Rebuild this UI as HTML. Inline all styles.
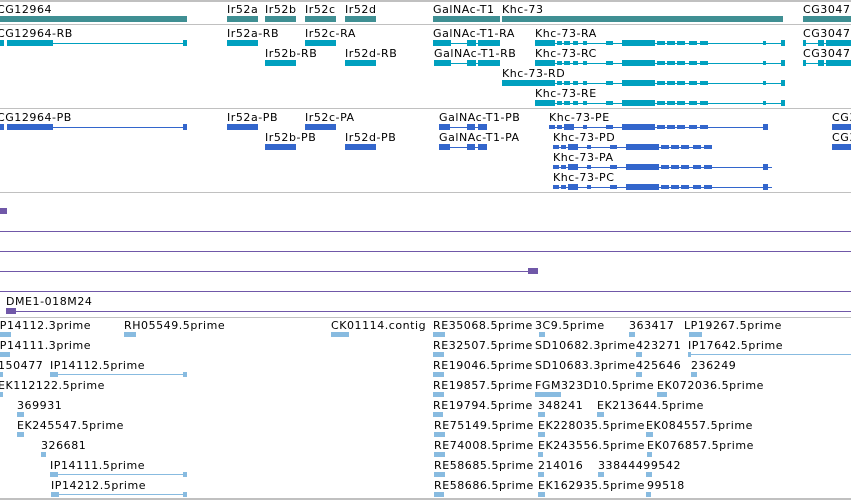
<!DOCTYPE html>
<html><head><meta charset="utf-8"><style>
html,body{margin:0;padding:0;background:#fff;width:851px;height:500px;overflow:hidden}
svg{display:block}
text{font-family:"DejaVu Sans","Liberation Sans",sans-serif;font-size:11px;fill:#000;letter-spacing:0.55px}
</style></head><body>
<svg width="851" height="500" xmlns="http://www.w3.org/2000/svg" shape-rendering="crispEdges">
<defs>
<g id="kT" fill="#00a0bf">
<rect x="535" y="3" width="250" height="1"/>
<rect x="535" y="0" width="20" height="6"/><rect x="557" y="1" width="5" height="4"/><rect x="564" y="1" width="6" height="4"/><rect x="573" y="1" width="5" height="4"/><rect x="583" y="1" width="4" height="4"/><rect x="606" y="1" width="7" height="4"/><rect x="622" y="0" width="33" height="6"/><rect x="657" y="1" width="8" height="4"/><rect x="667" y="1" width="8" height="4"/><rect x="677" y="1" width="8" height="4"/><rect x="689" y="1" width="8" height="4"/><rect x="700" y="1" width="8" height="4"/><rect x="763" y="1" width="3" height="4"/><rect x="781" y="0" width="4" height="6"/>
</g>
<g id="kP" fill="#3366cc">
<rect x="549" y="3" width="219" height="1"/>
<rect x="549" y="1" width="6" height="4"/><rect x="557" y="1" width="5" height="4"/><rect x="564" y="0" width="10" height="6"/><rect x="583" y="1" width="4" height="4"/><rect x="606" y="1" width="7" height="4"/><rect x="622" y="0" width="33" height="6"/><rect x="657" y="1" width="8" height="4"/><rect x="667" y="1" width="8" height="4"/><rect x="677" y="1" width="8" height="4"/><rect x="689" y="1" width="8" height="4"/><rect x="700" y="1" width="8" height="4"/>
</g>
</defs>
<g fill="#c0c0c0">
<rect x="0" y="0" width="851" height="2"/><rect x="0" y="24" width="851" height="1"/><rect x="0" y="108" width="851" height="1"/><rect x="0" y="192" width="851" height="1"/><rect x="0" y="317" width="851" height="1"/><rect x="0" y="498" width="851" height="2"/>
</g>
<g fill="#3f8f93">
<rect x="0" y="16" width="187" height="6"/>
<rect x="227" y="16" width="31" height="6"/><rect x="265" y="16" width="31" height="6"/><rect x="305" y="16" width="31" height="6"/><rect x="345" y="16" width="31" height="6"/>
<rect x="433" y="16" width="67" height="6"/><rect x="502" y="16" width="281" height="6"/><rect x="803" y="16" width="48" height="6"/>
</g>
<text x="-3" y="13">CG12964</text><text x="227" y="13">Ir52a</text><text x="265" y="13">Ir52b</text><text x="305" y="13">Ir52c</text><text x="345" y="13">Ir52d</text>
<text x="433" y="13">GalNAc-T1</text><text x="502" y="13">Khc-73</text><text x="803" y="13">CG3047</text>
<g fill="#00a0bf">
<rect x="0" y="40" width="4" height="6"/><rect x="7" y="40" width="46" height="6"/><rect x="53" y="43" width="134" height="1"/><rect x="183" y="40" width="4" height="6"/>
<rect x="227" y="40" width="31" height="6"/><rect x="305" y="40" width="31" height="6"/><rect x="265" y="60" width="31" height="6"/><rect x="345" y="60" width="31" height="6"/>
<rect x="433" y="40" width="18" height="6"/><rect x="433" y="43" width="67" height="1"/><rect x="467" y="40" width="9" height="6"/><rect x="478" y="40" width="22" height="6"/>
<rect x="434" y="60" width="17" height="6"/><rect x="434" y="63" width="66" height="1"/><rect x="467" y="60" width="9" height="6"/><rect x="478" y="60" width="22" height="6"/>
<rect x="803" y="40" width="3" height="6"/><rect x="803" y="43" width="48" height="1"/><rect x="818" y="40" width="6" height="6"/><rect x="826" y="40" width="25" height="6"/>
<rect x="803" y="60" width="3" height="6"/><rect x="803" y="63" width="48" height="1"/><rect x="818" y="60" width="6" height="6"/><rect x="826" y="60" width="25" height="6"/>
<rect x="502" y="80" width="53" height="6"/><rect x="502" y="83" width="40" height="1"/>
</g>
<use href="#kT" y="40"/><use href="#kT" y="60"/><use href="#kT" y="80"/><use href="#kT" y="100"/>
<text x="-3" y="37">CG12964-RB</text><text x="227" y="37">Ir52a-RB</text><text x="305" y="37">Ir52c-RA</text><text x="265" y="57">Ir52b-RB</text><text x="345" y="57">Ir52d-RB</text>
<text x="433" y="37">GalNAc-T1-RA</text><text x="535" y="37">Khc-73-RA</text><text x="803" y="37">CG3047</text>
<text x="434" y="57">GalNAc-T1-RB</text><text x="535" y="57">Khc-73-RC</text><text x="803" y="57">CG3047</text>
<text x="502" y="77">Khc-73-RD</text><text x="535" y="97">Khc-73-RE</text>
<g fill="#3366cc">
<rect x="0" y="124" width="4" height="6"/><rect x="7" y="124" width="46" height="6"/><rect x="53" y="127" width="134" height="1"/><rect x="183" y="124" width="4" height="6"/>
<rect x="227" y="124" width="31" height="6"/><rect x="305" y="124" width="31" height="6"/><rect x="265" y="144" width="31" height="6"/><rect x="345" y="144" width="31" height="6"/>
<rect x="439" y="124" width="11" height="6"/><rect x="439" y="127" width="48" height="1"/><rect x="467" y="124" width="8" height="6"/><rect x="478" y="124" width="9" height="6"/>
<rect x="439" y="144" width="11" height="6"/><rect x="439" y="147" width="48" height="1"/><rect x="467" y="144" width="8" height="6"/><rect x="478" y="144" width="9" height="6"/>
<rect x="832" y="124" width="19" height="6"/><rect x="832" y="144" width="19" height="6"/>
<rect x="763" y="124" width="5" height="6"/><rect x="763" y="164" width="5" height="6"/><rect x="763" y="184" width="5" height="6"/>
</g>
<use href="#kP" y="124"/><use href="#kP" x="4" y="144"/><use href="#kP" x="4" y="164"/><use href="#kP" x="4" y="184"/>
<rect x="712" y="146" width="60" height="3" fill="#fff"/>
<text x="-3" y="121">CG12964-PB</text><text x="227" y="121">Ir52a-PB</text><text x="305" y="121">Ir52c-PA</text><text x="265" y="141">Ir52b-PB</text><text x="345" y="141">Ir52d-PB</text>
<text x="439" y="121">GalNAc-T1-PB</text><text x="549" y="121">Khc-73-PE</text><text x="832" y="121">CG3047</text>
<text x="439" y="141">GalNAc-T1-PA</text><text x="553" y="141">Khc-73-PD</text><text x="832" y="141">CG3047</text>
<text x="553" y="161">Khc-73-PA</text><text x="553" y="181">Khc-73-PC</text>
<g fill="#7058a8">
<rect x="0" y="208" width="7" height="6"/>
<rect x="0" y="231" width="851" height="1"/><rect x="0" y="251" width="851" height="1"/><rect x="0" y="271" width="530" height="1"/><rect x="528" y="268" width="10" height="6"/><rect x="0" y="291" width="851" height="1"/>
<rect x="6" y="311" width="845" height="1"/><rect x="6" y="308" width="10" height="6"/>
</g>
<text x="6" y="305">DME1-018M24</text>
<g fill="#88bbe0">
<rect x="0" y="332" width="11" height="5"/><rect x="124" y="332" width="12" height="5"/><rect x="331" y="332" width="18" height="5"/><rect x="433" y="332" width="12" height="5"/><rect x="539" y="332" width="6" height="5"/><rect x="629" y="332" width="6" height="5"/><rect x="689" y="332" width="13" height="5"/>
<rect x="0" y="352" width="10" height="5"/><rect x="433" y="352" width="11" height="5"/><rect x="636" y="352" width="6" height="5"/><rect x="688" y="354" width="163" height="1"/><rect x="688" y="352" width="3" height="5"/>
<rect x="0" y="372" width="3" height="5"/><rect x="50" y="372" width="8" height="5"/><rect x="50" y="374" width="137" height="1"/><rect x="183" y="372" width="4" height="5"/><rect x="433" y="372" width="11" height="5"/><rect x="636" y="372" width="6" height="5"/><rect x="691" y="372" width="6" height="5"/>
<rect x="0" y="392" width="3" height="5"/><rect x="433" y="392" width="11" height="5"/><rect x="535" y="392" width="26" height="5"/><rect x="657" y="392" width="10" height="5"/>
<rect x="17" y="412" width="7" height="5"/><rect x="433" y="412" width="10" height="5"/><rect x="538" y="412" width="7" height="5"/><rect x="597" y="412" width="7" height="5"/>
<rect x="17" y="432" width="7" height="5"/><rect x="434" y="432" width="11" height="5"/><rect x="538" y="432" width="7" height="5"/><rect x="646" y="432" width="7" height="5"/>
<rect x="41" y="452" width="5" height="5"/><rect x="434" y="452" width="11" height="5"/><rect x="538" y="452" width="5" height="5"/><rect x="647" y="452" width="5" height="5"/>
<rect x="50" y="472" width="8" height="5"/><rect x="50" y="474" width="137" height="1"/><rect x="183" y="472" width="4" height="5"/><rect x="434" y="472" width="11" height="5"/><rect x="538" y="472" width="6" height="5"/><rect x="598" y="472" width="6" height="5"/><rect x="646" y="472" width="6" height="5"/>
<rect x="51" y="492" width="8" height="5"/><rect x="51" y="494" width="136" height="1"/><rect x="183" y="492" width="4" height="5"/><rect x="434" y="492" width="10" height="5"/><rect x="538" y="492" width="7" height="5"/><rect x="646" y="492" width="5" height="5"/>
</g>
<text x="-4" y="329">IP14112.3prime</text><text x="124" y="329">RH05549.5prime</text><text x="331" y="329">CK01114.contig</text><text x="433" y="329">RE35068.5prime</text><text x="535" y="329">3C9.5prime</text><text x="629" y="329">363417</text><text x="684" y="329">LP19267.5prime</text>
<text x="-4" y="349">IP14111.3prime</text><text x="433" y="349">RE32507.5prime</text><text x="535" y="349">SD10682.3prime</text><text x="636" y="349">423271</text><text x="688" y="349">IP17642.5prime</text>
<text x="-2" y="369">150477</text><text x="50" y="369">IP14112.5prime</text><text x="433" y="369">RE19046.5prime</text><text x="535" y="369">SD10683.3prime</text><text x="636" y="369">425646</text><text x="691" y="369">236249</text>
<text x="-2" y="389">EK112122.5prime</text><text x="433" y="389">RE19857.5prime</text><text x="535" y="389">FGM323D10.5prime</text><text x="657" y="389">EK072036.5prime</text>
<text x="17" y="409">369931</text><text x="433" y="409">RE19794.5prime</text><text x="538" y="409">348241</text><text x="597" y="409">EK213644.5prime</text>
<text x="17" y="429">EK245547.5prime</text><text x="434" y="429">RE75149.5prime</text><text x="538" y="429">EK228035.5prime</text><text x="646" y="429">EK084557.5prime</text>
<text x="41" y="449">326681</text><text x="434" y="449">RE74008.5prime</text><text x="538" y="449">EK243556.5prime</text><text x="647" y="449">EK076857.5prime</text>
<text x="50" y="469">IP14111.5prime</text><text x="434" y="469">RE58685.5prime</text><text x="538" y="469">214016</text><text x="598" y="469">33844499542</text>
<text x="51" y="489">IP14212.5prime</text><text x="434" y="489">RE58686.5prime</text><text x="538" y="489">EK162935.5prime</text><text x="647" y="489">99518</text>
</svg>
</body></html>
